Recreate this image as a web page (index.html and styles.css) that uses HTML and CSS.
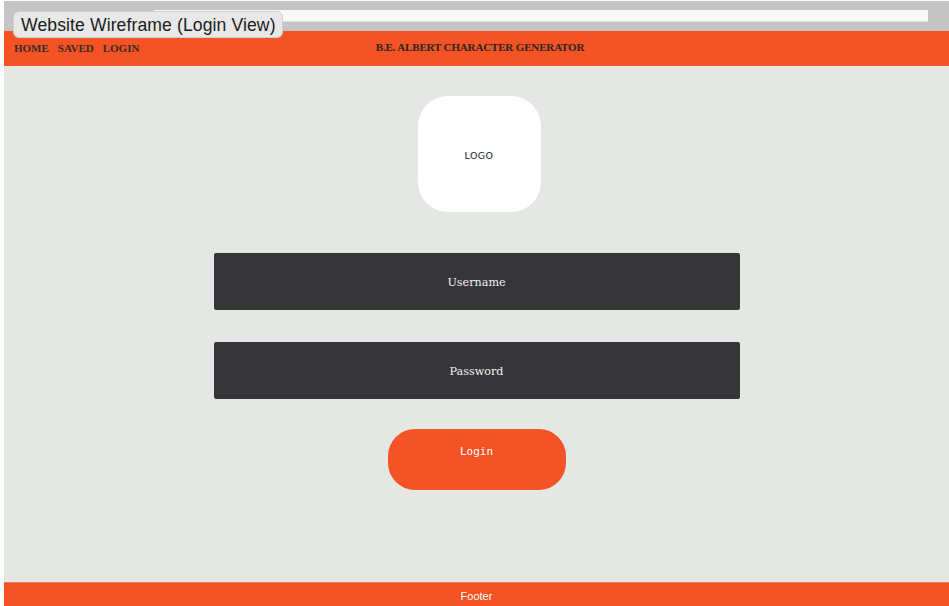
FILE: index.html
```html
<!DOCTYPE html>
<html>
<head>
<meta charset="utf-8">
<link rel="stylesheet" href="styles.css">
</head>
<body>
<div class="frame">
  <div class="topbar"><div class="urlbar"></div></div>
  <div class="frame-title">Website Wireframe (Login View)</div>
  <header class="header">
    <nav class="nav"><span>HOME</span><span>SAVED</span><span>LOGIN</span></nav>
    <div class="site-title">B.E. ALBERT CHARACTER GENERATOR</div>
    <div></div>
  </header>
  <main class="main">
    <div class="logo">LOGO</div>
    <div class="field first">Username</div>
    <div class="field">Password</div>
    <div class="login-btn">Login</div>
  </main>
  <footer class="footer">Footer</footer>
</div>
</body>
</html>
```
FILE: styles.css
```css
html, body { margin: 0; padding: 0; background: #ffffff; }
body { width: 949px; height: 606px; overflow: hidden; font-family: "Liberation Sans", Arial, sans-serif; }
.frame { position: relative; padding: 1px 0 0 4px; }
.topbar { height: 30px; background: #c4c4c4; padding: 9px 21px 0 0; box-sizing: border-box; }
.urlbar { height: 12px; background: #f8f8f8; margin-left: 150px; border-bottom: 1px solid #e2e2e2; box-sizing: border-box; }
.frame-title { position: absolute; left: 13px; top: 11px; width: 270px; height: 27px; box-sizing: border-box; background: #e8e8e8; border: 1px solid #d0d0d0; border-radius: 6px; font-family: "Liberation Sans", Arial, sans-serif; font-size: 17.6px; letter-spacing: 0.1px; color: #1c1c1c; line-height: 26px; padding-left: 7px; z-index: 2; }
.header { height: 35px; background: #f35325; display: grid; grid-template-columns: 1fr auto 1fr; align-items: center; }
.nav { display: flex; gap: 9px; padding-left: 10px; padding-bottom: 1px; font-family: "Liberation Serif", "DejaVu Serif", serif; font-weight: bold; font-size: 11px; color: #3a2a24; }
.site-title { font-family: "Liberation Serif", "DejaVu Serif", serif; font-weight: bold; font-size: 11px; letter-spacing: -0.15px; color: #2b2420; padding-bottom: 3px; padding-left: 7px; }
.main { height: 516px; background: #e5e7e4; display: flex; flex-direction: column; align-items: center; }
.logo { margin-top: 30px; width: 123px; height: 116px; flex-shrink: 0; background: #ffffff; border-radius: 30px; display: flex; align-items: center; justify-content: center; font-family: "DejaVu Sans", sans-serif; font-size: 9.5px; letter-spacing: 0.4px; color: #222; margin-left: 5px; padding-top: 2px; box-sizing: border-box; }
.field { width: 526px; height: 57px; flex-shrink: 0; background: #363638; border-radius: 2px; display: flex; align-items: center; justify-content: center; color: #f2f2f2; font-family: "DejaVu Serif", serif; font-size: 11.2px; margin-top: 32px; padding-top: 2px; box-sizing: border-box; }
.field.first { margin-top: 41px; }
.login-btn { margin-top: 30px; width: 178px; height: 61px; flex-shrink: 0; border-radius: 27px; background: #f35325; color: #ffffff; font-family: "DejaVu Sans Mono", "Liberation Mono", monospace; font-size: 11px; text-align: center; line-height: 14px; padding-top: 16px; box-sizing: border-box; }
.footer { height: 24px; background: #f35325; border-top: 1px solid #f07a58; box-sizing: border-box; text-align: center; color: #ffffff; font-family: "Liberation Sans", Arial, sans-serif; font-size: 11px; padding-top: 6px; line-height: 14px; }
```
